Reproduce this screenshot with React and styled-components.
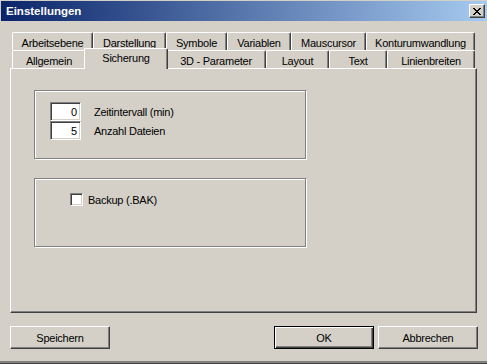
import React from 'react';
import styled, { createGlobalStyle, css } from 'styled-components';

const GlobalStyle = createGlobalStyle`
  html, body {
    margin: 0;
    padding: 0;
    background: #d4d0c8;
  }
  body {
    font-family: "Liberation Sans", Arial, sans-serif;
    font-size: 11px;
    color: #000;
  }
`;

const Window = styled.div`
  width: 487px;
  height: 364px;
  box-sizing: border-box;
  padding: 1px 0 0 1px;
  background: #d4d0c8;
  border-bottom: 1px solid #404040;
  box-shadow: inset 0 -2px #808080;
  display: flex;
  flex-direction: column;
  overflow: hidden;
`;

const TitleBar = styled.div`
  height: 20px;
  flex-shrink: 0;
  display: flex;
  align-items: center;
  justify-content: space-between;
  padding: 0 2px 0 5px;
  background: linear-gradient(to right, #0a246a, #a6caf0);
`;

const TitleText = styled.span`
  color: #fff;
  font-weight: bold;
  font-size: 11.5px;
`;

const CloseButton = styled.div`
  width: 16px;
  height: 14px;
  box-sizing: border-box;
  background: #d4d0c8;
  border: 1px solid;
  border-color: #fff #404040 #404040 #fff;
  box-shadow: inset -1px -1px #808080;
  display: flex;
  align-items: center;
  justify-content: center;
`;

const Content = styled.div`
  display: flex;
  flex-direction: column;
  padding: 11px 9px 0 9px;
`;

const TabStrip = styled.div`
  display: flex;
  flex-direction: column;
  padding-left: 2px;
`;

const TabRow = styled.div`
  display: flex;
  height: 18px;
`;

const Tab = styled.div`
  width: ${p => p.$w}px;
  height: 18px;
  box-sizing: border-box;
  border: 1px solid #fff;
  border-bottom: none;
  border-right-color: #404040;
  border-radius: 2px 2px 0 0;
  box-shadow: inset -1px 0 #808080;
  display: flex;
  align-items: center;
  justify-content: center;
  padding-top: 2px;
  letter-spacing: -0.25px;
  white-space: nowrap;
  background: #d4d0c8;
  ${p => p.$active && css`
    width: ${p.$w + 4}px;
    height: 21px;
    margin: -2px -2px -1px;
    padding: 0 0 3px;
    position: relative;
    z-index: 2;
  `}
`;

const Panel = styled.div`
  height: 245px;
  box-sizing: border-box;
  margin-right: 1px;
  border: 1px solid;
  border-color: #fff #404040 #404040 #fff;
  box-shadow: inset -1px -1px #808080;
  padding: 21px 0 0 23px;
  display: flex;
  flex-direction: column;
  gap: 19px;
`;

const GroupBox = styled.div`
  width: 272px;
  height: 69px;
  box-sizing: border-box;
  border: 1px solid #808080;
  box-shadow: inset 1px 1px #fff, 1px 1px #fff;
  padding: ${p => p.$pad};
  display: flex;
  flex-direction: column;
`;

const FieldRow = styled.div`
  display: flex;
  align-items: center;
  gap: 13px;
`;

const NumberBox = styled.div`
  width: 31px;
  height: 19px;
  box-sizing: border-box;
  background: #fff;
  border: 1px solid;
  border-color: #808080 #fff #fff #808080;
  box-shadow: inset 1px 1px #404040, inset -1px -1px #d4d0c8;
  display: flex;
  align-items: center;
  justify-content: flex-end;
  padding: 1px 3px 0 0;
`;

const Label = styled.span`
  letter-spacing: -0.25px;
  white-space: nowrap;
`;

const CheckRow = styled.label`
  display: flex;
  align-items: center;
  gap: 5px;
`;

const CheckBox = styled.span`
  width: 13px;
  height: 13px;
  box-sizing: border-box;
  background: #fff;
  border: 1px solid;
  border-color: #808080 #fff #fff #808080;
  box-shadow: inset 1px 1px #404040, inset -1px -1px #d4d0c8;
`;

const ButtonRow = styled.div`
  display: flex;
  align-items: center;
  gap: 4px;
  margin-top: 13px;
`;

const Spacer = styled.div`
  flex: 1;
`;

const Button = styled.div`
  width: 100px;
  height: 23px;
  box-sizing: border-box;
  border: 1px solid;
  border-color: #fff #404040 #404040 #fff;
  box-shadow: inset -1px -1px #808080;
  display: flex;
  align-items: center;
  justify-content: center;
  padding-top: 1px;
  letter-spacing: -0.25px;
  ${p => p.$default && css`
    border: 1px solid #000;
    box-shadow: inset 1px 1px #fff, inset -1px -1px #404040, inset -2px -2px #808080;
  `}
`;

const tabRows = [
  [
    { label: 'Arbeitsebene', w: 81 },
    { label: 'Darstellung', w: 73 },
    { label: 'Symbole', w: 61 },
    { label: 'Variablen', w: 64 },
    { label: 'Mauscursor', w: 75 },
    { label: 'Konturumwandlung', w: 109 },
  ],
  [
    { label: 'Allgemein', w: 74 },
    { label: 'Sicherung', w: 80, active: true },
    { label: '3D - Parameter', w: 100 },
    { label: 'Layout', w: 63 },
    { label: 'Text', w: 58 },
    { label: 'Linienbreiten', w: 88 },
  ],
];

const App = () => (
  <>
    <GlobalStyle />
    <Window>
      <TitleBar>
        <TitleText>Einstellungen</TitleText>
        <CloseButton>
          <svg width="8" height="7" viewBox="0 0 8 7">
            <path d="M0 0 L7 7 M1 0 L8 7 M7 0 L0 7 M8 0 L1 7" stroke="#000" strokeWidth="1" />
          </svg>
        </CloseButton>
      </TitleBar>

      <Content>
        <TabStrip>
          {tabRows.map((row, i) => (
            <TabRow key={i}>
              {row.map(t => (
                <Tab key={t.label} $w={t.w} $active={t.active}>{t.label}</Tab>
              ))}
            </TabRow>
          ))}
        </TabStrip>

        <Panel>
          <GroupBox $pad="11px 0 0 15px">
            <FieldRow>
              <NumberBox>0</NumberBox>
              <Label>Zeitintervall (min)</Label>
            </FieldRow>
            <FieldRow>
              <NumberBox>5</NumberBox>
              <Label>Anzahl Dateien</Label>
            </FieldRow>
          </GroupBox>
          <GroupBox $pad="14px 0 0 35px">
            <CheckRow>
              <CheckBox />
              <Label>Backup (.BAK)</Label>
            </CheckRow>
          </GroupBox>
        </Panel>

        <ButtonRow>
          <Button>Speichern</Button>
          <Spacer />
          <Button $default>OK</Button>
          <Button>Abbrechen</Button>
        </ButtonRow>
      </Content>
    </Window>
  </>
);

export default App;
